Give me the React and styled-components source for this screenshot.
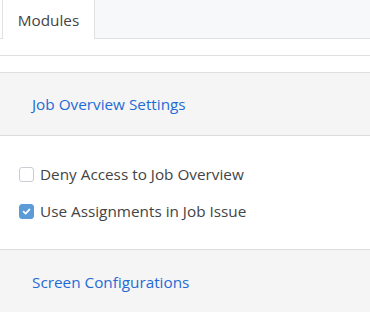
import React from "react";
import styled, { createGlobalStyle } from "styled-components";

const Global = createGlobalStyle`
  body {
    margin: 0;
    background: #ffffff;
    font-family: "Open Sans", "Noto Sans", sans-serif;
  }
`;

const TabStrip = styled.div`
  display: flex;
  height: 38px;
  background: #f7f8fa;
  border-bottom: 1px solid #dfe1e5;
`;

const TabGap = styled.div`
  width: 2px;
  background: #ffffff;
`;

const Tab = styled.div`
  display: flex;
  align-items: center;
  justify-content: center;
  width: 93px;
  height: 39px;
  background: #ffffff;
  border-left: 1px solid #dfe1e5;
  border-right: 1px solid #dfe1e5;
  font-size: 15.3px;
  color: #444;
  box-sizing: border-box;
`;

const Spacer = styled.div`
  height: 16px;
  border-bottom: 1px solid #dfdfdf;
`;

const Section = styled.div`
  display: flex;
  flex-direction: column;
  border-bottom: 1px solid #dcdcdc;
  background: ${(p) => (p.$grey ? "#f5f5f5" : "#ffffff")};
  padding: ${(p) => p.$pad};
  gap: ${(p) => p.$gap || "0"};
`;

const SectionLink = styled.a`
  font-size: 15.3px;
  line-height: 20px;
  color: #1f6bd6;
  text-decoration: none;
  cursor: pointer;
`;

const CheckRow = styled.label`
  display: flex;
  align-items: center;
  gap: 6px;
  font-size: 15.3px;
  line-height: 20px;
  color: #444;
`;

const Box = styled.span`
  display: inline-flex;
  align-items: center;
  justify-content: center;
  width: 15px;
  height: 15px;
  box-sizing: border-box;
  border-radius: 3px;
  border: 1px solid ${(p) => (p.$on ? "#5b9bd8" : "#c9cdd3")};
  background: ${(p) => (p.$on ? "#5b9bd8" : "#ffffff")};
`;

const Check = ({ on, children }) => (
  <CheckRow>
    <Box $on={on}>
      {on && (
        <svg width="9" height="9" viewBox="0 0 10 10">
          <path d="M1.8 5.2 L4 7.3 L8.2 2.8" fill="none" stroke="#fff" strokeWidth="2" strokeLinecap="round" strokeLinejoin="round" />
        </svg>
      )}
    </Box>
    {children}
  </CheckRow>
);

export default function App() {
  return (
    <>
      <Global />
      <TabStrip>
        <TabGap />
        <Tab>Modules</Tab>
      </TabStrip>
      <Spacer />
      <Spacer />
      <Section $grey $pad="21px 32px 21px">
        <SectionLink>Job Overview Settings</SectionLink>
      </Section>
      <Section $pad="28px 19px 28px" $gap="17px">
        <Check>Deny Access to Job Overview</Check>
        <Check on>Use Assignments in Job Issue</Check>
      </Section>
      <Section $grey $pad="22px 32px 40px">
        <SectionLink>Screen Configurations</SectionLink>
      </Section>
    </>
  );
}
